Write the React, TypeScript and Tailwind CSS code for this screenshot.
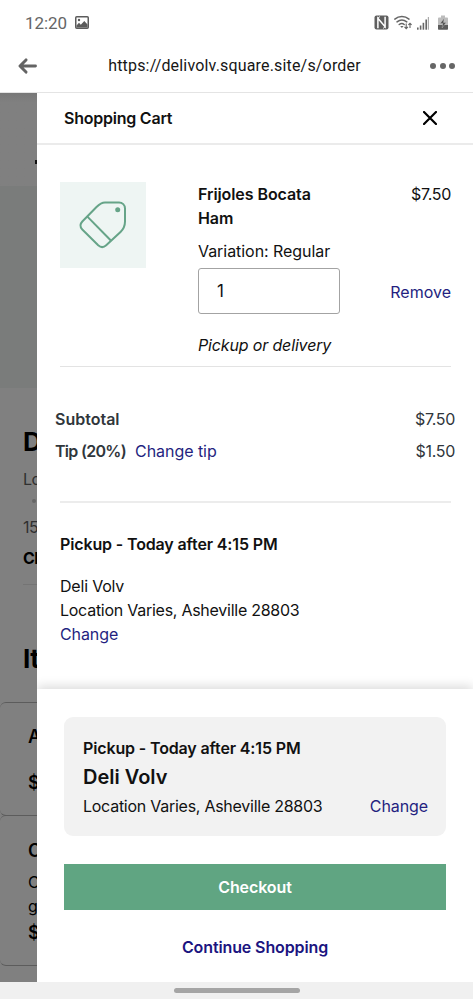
import type { ReactNode } from "react";

function StatusBar() {
  return (
    <div className="flex h-[45px] items-center pr-[24px] pl-[25px] text-[#666]">
      <span className="font-[Roboto,sans-serif] text-[17px] leading-5 tracking-[-0.05px]">12:20</span>
      <svg className="ml-[8px]" width="14" height="13" viewBox="0 0 14 13">
        <rect x="0.75" y="0.75" width="12.5" height="11.5" rx="1" fill="#fff" stroke="#5c5c5c" strokeWidth="1.5" />
        <path d="M1.5 11.5V9.4L4 6.8l1.8 1.9L9.3 5l3.2 3.4v3.1z" fill="#5c5c5c" />
        <circle cx="4" cy="4" r="1.2" fill="#5c5c5c" />
      </svg>
      <div className="flex-1" />
      <svg width="75" height="16" viewBox="0 0 75 16">
        <rect x="0.5" y="0.500" width="14" height="14" rx="2" fill="#5f5f5f" />
        <path d="M3.900 13.200V3.200L11.100 11.800V1.800" fill="none" stroke="#fff" strokeWidth="1.500" />
        <path d="M3.900 3.200l2-1.600M11.100 11.800l-2 1.600" stroke="#fff" strokeWidth="1" />
        <g fill="none" stroke="#666" strokeWidth="1.5" strokeLinecap="round">
          <path d="M20.8 4.100c4.200-3.500 10-3.500 14.200 0" />
          <path d="M23 6.900c3-2.400 6.800-2.400 9.800 0" />
          <path d="M25.200 9.500c1.600-1.200 3.600-1.200 5 0" />
        </g>
        <path d="M26.200 11.100h3.400l-1.700 2z" fill="#666" />
        <path d="M32.200 8.500v5m-1.700-1.700 1.700 1.800 1.700-1.800M36 13.100V8.300m-1.600 1.600L36 8.200l1.600 1.700" fill="none" stroke="#666" strokeWidth="1.100" />
        <g fill="#666">
          <rect x="43" y="12.500" width="1.600" height="2.200" />
          <rect x="45.800" y="10.500" width="1.600" height="4.200" />
          <rect x="48.600" y="7.800" width="1.600" height="6.900" />
          <rect x="51.400" y="4.500" width="1.600" height="10.200" />
        </g>
        <rect x="53.800" y="2" width="1.200" height="12.700" fill="#aaa" />
        <path d="M65.200 2.500H67V.5h4v2h1.800c.8 0 1.200.5 1.200 1.200V10H64V3.700c0-.7.4-1.200 1.200-1.200z" fill="#bcbcbc" />
        <path d="M64 10h10v3.700c0 .6-.4 1-1 1h-8c-.6 0-1-.4-1-1z" fill="#5c5c5c" />
        <path d="M70.200 3.200l-4 5.200h2.600l-.7 4.600 4-5.600h-2.600z" fill="#4e4e4e" stroke="#c8c8c8" strokeWidth="0.400" />
      </svg>
    </div>
  );
}

function AddressBar() {
  return (
    <div className="flex h-12 items-center border-b border-[#e4e4e4] pr-[18px] pb-[6px] pl-[18px]">
      <svg width="19" height="16" viewBox="0 0 19 16" fill="none" stroke="#646464" strokeWidth="2.900" strokeLinecap="round" strokeLinejoin="round">
        <path d="M8 1.900 2 8l6 6.100M2.500 8h15" />
      </svg>
      <div className="flex-1 pl-[2px] text-center font-[Roboto,sans-serif] text-[16px] leading-6 tracking-[0.170px] text-[#161616]">
        https://delivolv.square.site/s/order
      </div>
      <div className="flex gap-[3.500px]">
        <span className="size-[6px] rounded-full bg-[#666]" />
        <span className="size-[6px] rounded-full bg-[#666]" />
        <span className="size-[6px] rounded-full bg-[#666]" />
      </div>
    </div>
  );
}

function MenuCard({ className, children }: { className: string; children: ReactNode }) {
  return (
    <div className={"rounded-l-[6px] border-y border-[#5c5c5c] pl-[28px] font-semibold text-black " + className}>
      {children}
    </div>
  );
}

function DimmedPage() {
  return (
    <div className="w-[37px] shrink-0 overflow-hidden bg-[#808080] whitespace-nowrap text-[#303030]">
      <div className="h-[93px] bg-linear-to-b from-[#777] to-[#808080] to-10% pt-[67px] pl-[35px]">
        <div className="h-[4px] w-4 bg-[#111]" />
      </div>
      <div className="h-[202px] bg-[#7a7c7b]" />
      <div className="pl-[23px]">
        <div className="pt-[38px] text-[26px] leading-8 font-bold text-black">D</div>
        <div className="pt-[9px] text-[16px] leading-6 tracking-[-0.5px]">Lo</div>
        <div className="mt-[8px] ml-[9px] size-1 rounded-full bg-[#666]" />
        <div className="pt-[12px] text-[16px] leading-6 tracking-[-0.5px]">15</div>
        <div className="border-b border-[#747474] pt-[7px] pb-[14px] text-[16px] leading-6 font-bold tracking-[-0.5px] text-black">Cl</div>
        <div className="pt-[58px] text-[26px] leading-8 font-bold tracking-[-0.5px] text-black">It</div>
      </div>
      <MenuCard className="mt-[27px] h-[114px] pt-[22px]">
        <div className="text-[18px] leading-6">A</div>
        <div className="pt-[22px] text-[18px] leading-6">$</div>
      </MenuCard>
      <MenuCard className="-mt-px h-[151px] pt-[23px]">
        <div className="text-[18px] leading-6">C</div>
        <div className="pt-[7px] text-[16px] leading-6 font-normal">C</div>
        <div className="text-[16px] leading-6 font-normal">g</div>
        <div className="pt-[3px] text-[18px] leading-6">$</div>
      </MenuCard>
    </div>
  );
}

function TagImage() {
  return (
    <div className="size-[86px] bg-[#eef5f3]">
      <svg width="86" height="86" viewBox="0 0 86 86" fill="none" stroke="#66a488" strokeWidth="2" strokeLinejoin="round">
        <path d="M45 20.400h14a6 6 0 0 1 6 6V39.500c0 4.500-1.400 7.500-4.500 10.500L46.200 63.300c-2.600 2.400-5.400 2.400-8 0L22.300 47.500c-2.500-2.600-2.500-5.300 0-8L36.500 25c3-3.100 5-4.600 8.500-4.600z" />
        <path d="M27.400 34.600 50.600 58.200" />
        <circle cx="57.700" cy="27.800" r="2.500" fill="#66a488" stroke="none" />
      </svg>
    </div>
  );
}

function CartItem() {
  return (
    <div className="mr-[22px] ml-[23px] flex h-[222px] border-b border-[#e3e3e3] pt-[37px]">
      <TagImage />
      <div className="ml-[52px] flex-1">
        <div className="flex justify-between">
          <div className="w-[140px] font-semibold tracking-[-0.080px]">Frijoles Bocata Ham</div>
          <div className="tracking-[-0.300px]">$7.50</div>
        </div>
        <div className="mt-[9px] tracking-[-0.050px]">Variation: Regular</div>
        <div className="mt-[5px] flex items-center justify-between">
          <div className="flex h-[46px] w-[142px] items-center rounded-[3px] border border-[#a3a3a3] pl-[18px] text-[17px]">1</div>
          <a className="pt-px text-[#241f80]">Remove</a>
        </div>
        <div className="mt-[19px] tracking-[-0.150px] italic">Pickup or delivery</div>
      </div>
    </div>
  );
}

function Totals() {
  return (
    <div className="mt-[40px] mr-[18px] ml-[18px] flex flex-col gap-2 text-[#30363b]">
      <div className="flex justify-between">
        <span className="font-semibold">Subtotal</span>
        <span className="tracking-[-0.300px]">$7.50</span>
      </div>
      <div className="flex">
        <span className="font-semibold tracking-[-0.700px]">Tip (20%)</span>
        <a className="ml-[9px] flex-1 tracking-[-0.050px] text-[#241f80]">Change tip</a>
        <span className="tracking-[-0.300px]">$1.50</span>
      </div>
    </div>
  );
}

function CheckoutPanel() {
  return (
    <div className="h-[293px] bg-white px-[27px] pt-[28px] shadow-[0_-3px_10px_rgba(0,0,0,0.14)]">
      <div className="h-[119px] rounded-[9px] bg-[#f2f2f2] px-[19px] pt-[19px] pr-[18px]">
        <div className="font-semibold tracking-[-0.140px]">Pickup - Today after 4:15 PM</div>
        <div className="mt-[3px] text-[20px] leading-7 font-semibold">Deli Volv</div>
        <div className="mt-[3px] flex justify-between">
          <span className="tracking-[-0.260px]">Location Varies, Asheville 28803</span>
          <a className="tracking-[-0.100px] text-[#241f80]">Change</a>
        </div>
      </div>
      <button className="mt-[28px] block h-[46px] w-full bg-[#60a582] pb-px font-semibold tracking-[-0.100px] text-white">Checkout</button>
      <a className="mt-[25px] block text-center font-semibold tracking-[-0.120px] text-[#1b1480]">Continue Shopping</a>
    </div>
  );
}

function CartDrawer() {
  return (
    <div className="flex flex-1 flex-col overflow-hidden bg-white">
      <div className="flex h-[52px] shrink-0 items-center justify-between border-b-2 border-[#ebebeb] pr-[36px] pl-[27px]">
        <span className="font-semibold tracking-[-0.230px]">Shopping Cart</span>
        <svg width="14" height="14" viewBox="0 0 14 14" stroke="#000" strokeWidth="2.200" strokeLinecap="round">
          <path d="M1 1l12 12M13 1 1 13" />
        </svg>
      </div>
      <CartItem />
      <Totals />
      <div className="mt-[38px] mr-[22px] ml-[23px] h-[1.500px] bg-[#ececec]" />
      <div className="mt-[29.500px] flex-1 pl-[23px]">
        <div className="font-semibold tracking-[-0.140px]">Pickup - Today after 4:15 PM</div>
        <div className="mt-[18px] tracking-[-0.200px]">Deli Volv</div>
        <div className="tracking-[-0.260px]">Location Varies, Asheville 28803</div>
        <a className="tracking-[-0.100px] text-[#241f80]">Change</a>
      </div>
      <CheckoutPanel />
    </div>
  );
}

export default function App() {
  return (
    <div className="flex h-[999px] w-[473px] flex-col overflow-hidden bg-white font-[Inter,'Liberation_Sans',sans-serif] text-[16px] leading-6 text-[#111]">
      <StatusBar />
      <AddressBar />
      <div className="flex h-[889px]">
        <DimmedPage />
        <CartDrawer />
      </div>
      <div className="flex h-[17px] justify-center bg-[#f0f0f0] pt-[6px]">
        <div className="h-[5px] w-[126px] rounded-full bg-[#a5a5a5]" />
      </div>
    </div>
  );
}
